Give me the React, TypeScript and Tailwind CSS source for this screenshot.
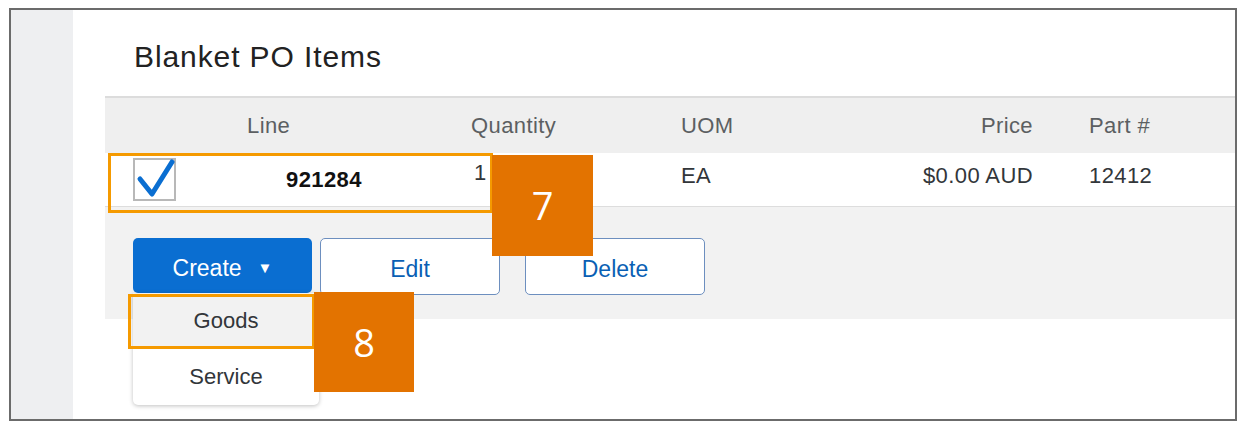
import React from "react";

const font = { fontFamily: '"Liberation Sans", Arial, sans-serif' };

export default function App() {
  return (
    <div className="w-[1245px] h-[446px] bg-white" style={font}>
      <div className="relative ml-[9px] mt-[8px] w-[1228px] h-[413px] border-2 border-[#6b6b6b] flex">
        <div className="w-[62px] h-full bg-[#eeeff1]" />
        <div className="flex-1 flex flex-col">
          <div className="h-[86px] flex items-center pl-[61px] pt-[6px] text-[30px] tracking-[0.9px] text-[#222]">
            Blanket PO Items
          </div>
          <div className="ml-[32px] flex flex-col">
            <div className="h-[57px] border-t-2 border-[#dcdcdc] bg-[#efefef] flex items-center text-[22px] text-[#5c5f62] tracking-[0.4px]">
              <div className="w-[366px] pl-[142px]">Line</div>
              <div className="w-[210px]">Quantity</div>
              <div className="w-[150px]">UOM</div>
              <div className="w-[202px] text-right">Price</div>
              <div className="pl-[56px]">Part #</div>
            </div>
            <div className="h-[54px] bg-white border-b border-[#dddddd] flex items-center text-[22px] text-[#32363a] tracking-[0.4px]">
              <div className="w-[366px] flex items-center pl-[28px]">
                <div className="w-[43px] h-[43px] border-2 border-[#b8b8b8] bg-white relative">
                  <svg viewBox="0 0 43 43" className="absolute -top-[2px] -left-[2px] w-[43px] h-[43px] overflow-visible">
                    <path d="M7 21 L19 36 L39 4" fill="none" stroke="#0a6ed1" strokeWidth="5" strokeLinecap="round" strokeLinejoin="round" />
                  </svg>
                </div>
                <div className="ml-[110px] font-bold text-[#111] -mt-[1px]">921284</div>
              </div>
              <div className="w-[210px] pl-[3px] -mt-[14px]">1</div>
              <div className="w-[150px] -mt-[8px]">EA</div>
              <div className="w-[202px] text-right -mt-[8px]">$0.00 AUD</div>
              <div className="pl-[56px] -mt-[8px]">12412</div>
            </div>
            <div className="h-[112px] bg-[#f2f2f2] flex items-start pt-[31px] pl-[28px] gap-[8px]">
              <button className="w-[179px] h-[55px] rounded-[5px] bg-[#0a6ed1] text-white text-[23px] flex items-center justify-center gap-[16px] pt-[6px]">
                <span>Create</span>
                <span className="text-[15px]">▼</span>
              </button>
              <button className="w-[180px] h-[57px] rounded-[5px] bg-white border border-[#6d8fbf] text-[#0a5fb4] text-[23px] pt-[6px]">
                Edit
              </button>
              <button className="ml-[17px] w-[180px] h-[57px] rounded-[5px] bg-white border border-[#6d8fbf] text-[#0a5fb4] text-[23px] pt-[6px]">
                Delete
              </button>
            </div>
          </div>
        </div>

        <div className="absolute left-[122px] top-[283px] w-[186px] h-[112px] bg-white rounded-b-[5px] shadow-[0_1px_4px_rgba(0,0,0,0.25)] flex flex-col text-[22px] text-[#32363a]">
          <div className="h-[55px] bg-[#f2f2f2] flex items-center justify-center">Goods</div>
          <div className="flex-1 flex items-center justify-center">Service</div>
        </div>

        <div className="absolute left-[97px] top-[143px] w-[385px] h-[60px] border-[3px] border-[#f59a00]" />
        <div className="absolute left-[117px] top-[284px] w-[187px] h-[55px] border-[3px] border-[#f59a00]" />

        <div className="absolute left-[481px] top-[145px] w-[101px] h-[101px] bg-[#e37300] flex items-center justify-center text-white text-[38px]" style={{ fontFamily: '"Open Sans", sans-serif' }}>
          7
        </div>
        <div className="absolute left-[303px] top-[282px] w-[100px] h-[100px] bg-[#e37300] flex items-center justify-center text-white text-[38px]" style={{ fontFamily: '"Open Sans", sans-serif' }}>
          8
        </div>
      </div>
    </div>
  );
}
